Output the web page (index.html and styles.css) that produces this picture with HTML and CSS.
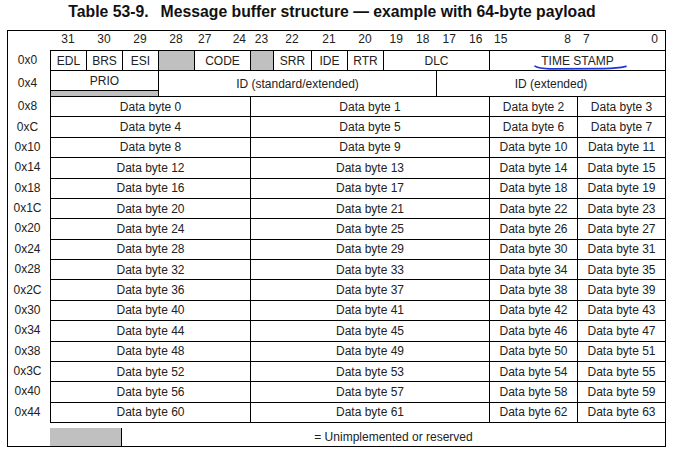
FILE: index.html
```html
<!DOCTYPE html>
<html>
<head>
<meta charset="utf-8">
<link rel="stylesheet" href="styles.css">
</head>
<body>
<div class="title">Table 53-9.<span class="gap"></span>Message buffer structure — example with 64-byte payload</div>
<div class="frame">
  <div class="h"></div>
  <div class="h">31</div>
  <div class="h">30</div>
  <div class="h">29</div>
  <div class="h">28</div>
  <div class="h pair"><span>27</span><span>24</span></div>
  <div class="h">23</div>
  <div class="h">22</div>
  <div class="h">21</div>
  <div class="h">20</div>
  <div class="h quad"><span>19</span><span>18</span></div>
  <div class="h quad"><span>17</span><span>16</span></div>
  <div class="h pair pair-l"><span>15</span><span>8</span></div>
  <div class="h pair pair-r"><span>7</span><span>0</span></div>

  <div class="lbl">0x0</div>
  <div class="c">EDL</div>
  <div class="c">BRS</div>
  <div class="c">ESI</div>
  <div class="c gray"></div>
  <div class="c">CODE</div>
  <div class="c gray"></div>
  <div class="c">SRR</div>
  <div class="c">IDE</div>
  <div class="c">RTR</div>
  <div class="c s2">DLC</div>
  <div class="c s2 ts">TIME STAMP
    <svg class="ink" width="94" height="7" viewBox="0 0 94 7"><path d="M1 2.2 C4 4.2 8 4.8 16 4.9 L70 4.6 C80 4.5 86 3.8 92 2.4" fill="none" stroke="#1d35d4" stroke-width="1.6" stroke-linecap="round"/></svg>
  </div>

  <div class="lbl r2">0x4</div>
  <div class="c s3">PRIO</div>
  <div class="c s7 r2">ID (standard/extended)</div>
  <div class="c s3 r2">ID (extended)</div>
  <div class="c s3 gray"></div>

  <div class="lbl">0x8</div><div class="c s5">Data byte 0</div><div class="c s6">Data byte 1</div><div class="c">Data byte 2</div><div class="c">Data byte 3</div>
  <div class="lbl">0xC</div><div class="c s5">Data byte 4</div><div class="c s6">Data byte 5</div><div class="c">Data byte 6</div><div class="c">Data byte 7</div>
  <div class="lbl">0x10</div><div class="c s5">Data byte 8</div><div class="c s6">Data byte 9</div><div class="c">Data byte 10</div><div class="c">Data byte 11</div>
  <div class="lbl">0x14</div><div class="c s5">Data byte 12</div><div class="c s6">Data byte 13</div><div class="c">Data byte 14</div><div class="c">Data byte 15</div>
  <div class="lbl">0x18</div><div class="c s5">Data byte 16</div><div class="c s6">Data byte 17</div><div class="c">Data byte 18</div><div class="c">Data byte 19</div>
  <div class="lbl">0x1C</div><div class="c s5">Data byte 20</div><div class="c s6">Data byte 21</div><div class="c">Data byte 22</div><div class="c">Data byte 23</div>
  <div class="lbl">0x20</div><div class="c s5">Data byte 24</div><div class="c s6">Data byte 25</div><div class="c">Data byte 26</div><div class="c">Data byte 27</div>
  <div class="lbl">0x24</div><div class="c s5">Data byte 28</div><div class="c s6">Data byte 29</div><div class="c">Data byte 30</div><div class="c">Data byte 31</div>
  <div class="lbl">0x28</div><div class="c s5">Data byte 32</div><div class="c s6">Data byte 33</div><div class="c">Data byte 34</div><div class="c">Data byte 35</div>
  <div class="lbl">0x2C</div><div class="c s5">Data byte 36</div><div class="c s6">Data byte 37</div><div class="c">Data byte 38</div><div class="c">Data byte 39</div>
  <div class="lbl">0x30</div><div class="c s5">Data byte 40</div><div class="c s6">Data byte 41</div><div class="c">Data byte 42</div><div class="c">Data byte 43</div>
  <div class="lbl">0x34</div><div class="c s5">Data byte 44</div><div class="c s6">Data byte 45</div><div class="c">Data byte 46</div><div class="c">Data byte 47</div>
  <div class="lbl">0x38</div><div class="c s5">Data byte 48</div><div class="c s6">Data byte 49</div><div class="c">Data byte 50</div><div class="c">Data byte 51</div>
  <div class="lbl">0x3C</div><div class="c s5">Data byte 52</div><div class="c s6">Data byte 53</div><div class="c">Data byte 54</div><div class="c">Data byte 55</div>
  <div class="lbl">0x40</div><div class="c s5">Data byte 56</div><div class="c s6">Data byte 57</div><div class="c">Data byte 58</div><div class="c">Data byte 59</div>
  <div class="lbl">0x44</div><div class="c s5 last">Data byte 60</div><div class="c s6 last">Data byte 61</div><div class="c last">Data byte 62</div><div class="c last">Data byte 63</div>

  <div class="lbl"></div>
  <div class="legend-box s2"></div>
  <div class="legend-text s11">= Unimplemented or reserved</div>
</div>
</body>
</html>
```

FILE: styles.css
```css
html, body {
  margin: 0;
  padding: 0;
  background: #fff;
}
body {
  font-family: "Liberation Sans", Arial, sans-serif;
  color: #222;
}
.title {
  width: 650px;
  height: 30px;
  margin-left: 7px;
  padding-right: 9px;
  text-align: center;
  font-weight: bold;
  font-size: 15.75px;
  line-height: 23px;
  color: #111;
  white-space: nowrap;
}
.title .gap {
  display: inline-block;
  width: 12px;
}
.frame {
  margin-left: 7px;
  width: 657px;
  border: 1px solid #000;
  display: grid;
  grid-template-columns: 42px 36px 36px 36px 36px 56px 23px 38px 36px 36px 53px 53px 88px 88px;
  grid-template-rows: 19px 20px 20px 6px repeat(15, 20.375px) 21.375px 23px;
  font-size: 12px;
  line-height: 14px;
}
.h, .lbl, .c, .legend-text {
  display: flex;
  align-items: center;
  justify-content: center;
  white-space: nowrap;
}
.h {
  padding-bottom: 3px;
}
.h.pair {
  justify-content: space-between;
  padding-left: 4px;
  padding-right: 4px;
}
.h.pair-l {
  padding-left: 5px;
  padding-right: 6px;
}
.h.pair-r {
  padding-left: 6px;
  padding-right: 7px;
}
.h.quad {
  justify-content: space-around;
}
.lbl {
  padding-right: 3px;
}
.c {
  border-left: 1px solid #000;
  border-top: 1px solid #000;
}
.c.last {
  border-bottom: 1px solid #000;
}
.gray {
  background: #c0c0c0;
}
.s2 { grid-column: span 2; }
.s3 { grid-column: span 3; }
.s5 { grid-column: span 5; }
.s6 { grid-column: span 6; }
.s7 { grid-column: span 7; }
.s11 { grid-column: span 11; }
.r2 { grid-row: span 2; }
.ts {
  position: relative;
}
.ink {
  position: absolute;
  left: 44px;
  top: 13px;
}
.legend-box {
  background: #c0c0c0;
  border-right: 1px solid #000;
  margin-top: 5px;
}
.legend-text {
  padding-top: 4px;
}
```
